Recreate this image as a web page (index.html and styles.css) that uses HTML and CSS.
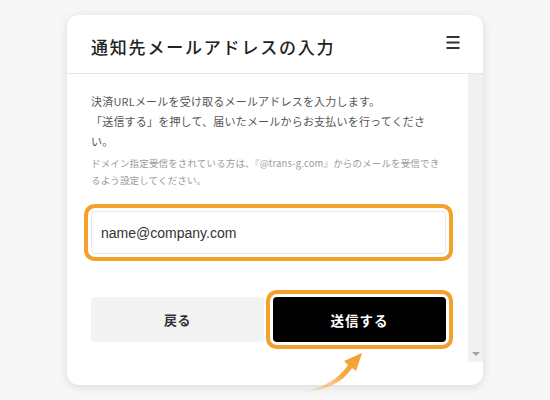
FILE: index.html
```html
<!DOCTYPE html>
<html lang="ja">
<head>
<meta charset="utf-8">
<title>通知先メールアドレスの入力</title>
<link rel="stylesheet" href="styles.css">
</head>
<body>
<div class="stage">
  <div class="card">
    <div class="card-header">
      <h1 class="title">通知先メールアドレスの入力</h1>
      <svg class="menu" width="14" height="14" viewBox="0 0 14 14" aria-hidden="true">
        <rect x="0.5" y="1" width="13" height="2" fill="#333"/>
        <rect x="0.5" y="6.5" width="13" height="2" fill="#333"/>
        <rect x="0.5" y="12" width="13" height="2" fill="#333"/>
      </svg>
    </div>
    <div class="card-body">
      <div class="content">
        <p class="lead">決済URLメールを受け取るメールアドレスを入力します。<br>「送信する」を押して、届いたメールからお支払いを行ってください。</p>
        <p class="note">ドメイン指定受信をされている方は、『@trans-g.com』からのメールを受信できるよう設定してください。</p>
        <input class="email" type="text" value="name@company.com">
        <div class="actions">
          <button class="btn btn-back" type="button">戻る</button>
          <button class="btn btn-send" type="button">送信する</button>
        </div>
      </div>
      <div class="track"><span class="track-arrow"></span></div>
    </div>
  </div>
</div>
<svg class="pointer" width="90" height="60" viewBox="0 0 90 60" aria-hidden="true">
  <defs>
    <linearGradient id="ag" x1="0" y1="1" x2="1" y2="0">
      <stop offset="0" stop-color="#f4a02c" stop-opacity="0"/>
      <stop offset="0.55" stop-color="#f4a02c" stop-opacity="0.9"/>
      <stop offset="1" stop-color="#f4a02c"/>
    </linearGradient>
  </defs>
  <path d="M12 52 Q44 46 58 25 L54 21 L72 13 L66 31 L62 28 Q48 50 12 52 Z" fill="url(#ag)"/>
</svg>
</body>
</html>
```
FILE: styles.css
```css
* { box-sizing: border-box; }
html, body { margin: 0; padding: 0; }
body {
  width: 550px;
  height: 400px;
  background: #f7f7f7;
  font-family: "Noto Sans CJK JP", "Noto Sans", sans-serif;
  position: relative;
  overflow: hidden;
}
.stage {
  padding: 15px 67px;
}
.card {
  height: 370px;
  background: #fff;
  border-radius: 12px;
  box-shadow: 0 2px 10px rgba(0,0,0,0.12);
  display: flex;
  flex-direction: column;
  overflow: hidden;
}
.card-header {
  height: 59px;
  flex: none;
  border-bottom: 1px solid #e6e6e6;
  display: flex;
  align-items: center;
  justify-content: space-between;
  padding: 0 23px 0 24px;
}
.title {
  margin: 4px 0 0;
  font-size: 17px;
  font-weight: 500;
  letter-spacing: 1.8px;
  color: #222;
}
.menu { display: block; margin-top: -4px; }
.card-body {
  height: 288px;
  flex: none;
  display: flex;
}
.content {
  flex: 1;
  padding: 17px 22px 0 24px;
}
.lead {
  margin: 0;
  font-size: 11px;
  line-height: 20px;
  letter-spacing: 0.2px;
  color: #555;
}
.note {
  margin: 4px 0 0;
  font-size: 9.5px;
  line-height: 17px;
  letter-spacing: 0.15px;
  color: #9a9a9a;
}
.email {
  display: block;
  width: 100%;
  height: 43px;
  margin-top: 22px;
  padding: 0 9px;
  border: 1px solid #e5e7eb;
  border-radius: 4px;
  font-family: "Liberation Sans", Arial, sans-serif;
  font-size: 14px;
  color: #333;
  background: #fff;
  outline: none;
  box-shadow: 0 0 0 3px #fff, 0 0 0 7px #f4a02c;
}
.actions {
  margin-top: 43px;
  display: grid;
  grid-template-columns: 1fr 1fr;
  gap: 9px;
}
.btn {
  height: 45px;
  border: none;
  border-radius: 4px;
  font-family: "Noto Sans CJK JP", sans-serif;
  font-weight: 700;
  cursor: pointer;
}
.btn-back {
  background: #f3f3f3;
  color: #333;
  font-size: 13px;
  letter-spacing: 0.5px;
}
.btn-send {
  background: #000;
  color: #fff;
  font-size: 13.5px;
  letter-spacing: 1px;
  box-shadow: 0 0 0 3px #fff, 0 0 0 7px #f4a02c;
}
.track {
  width: 15px;
  flex: none;
  background: #f1f1f1;
  display: flex;
  align-items: flex-end;
  justify-content: center;
  padding-bottom: 6px;
}
.track-arrow {
  width: 0;
  height: 0;
  border-left: 4px solid transparent;
  border-right: 4px solid transparent;
  border-top: 4px solid #a3a3a3;
}
.pointer {
  position: absolute;
  left: 290px;
  top: 340px;
}
```
